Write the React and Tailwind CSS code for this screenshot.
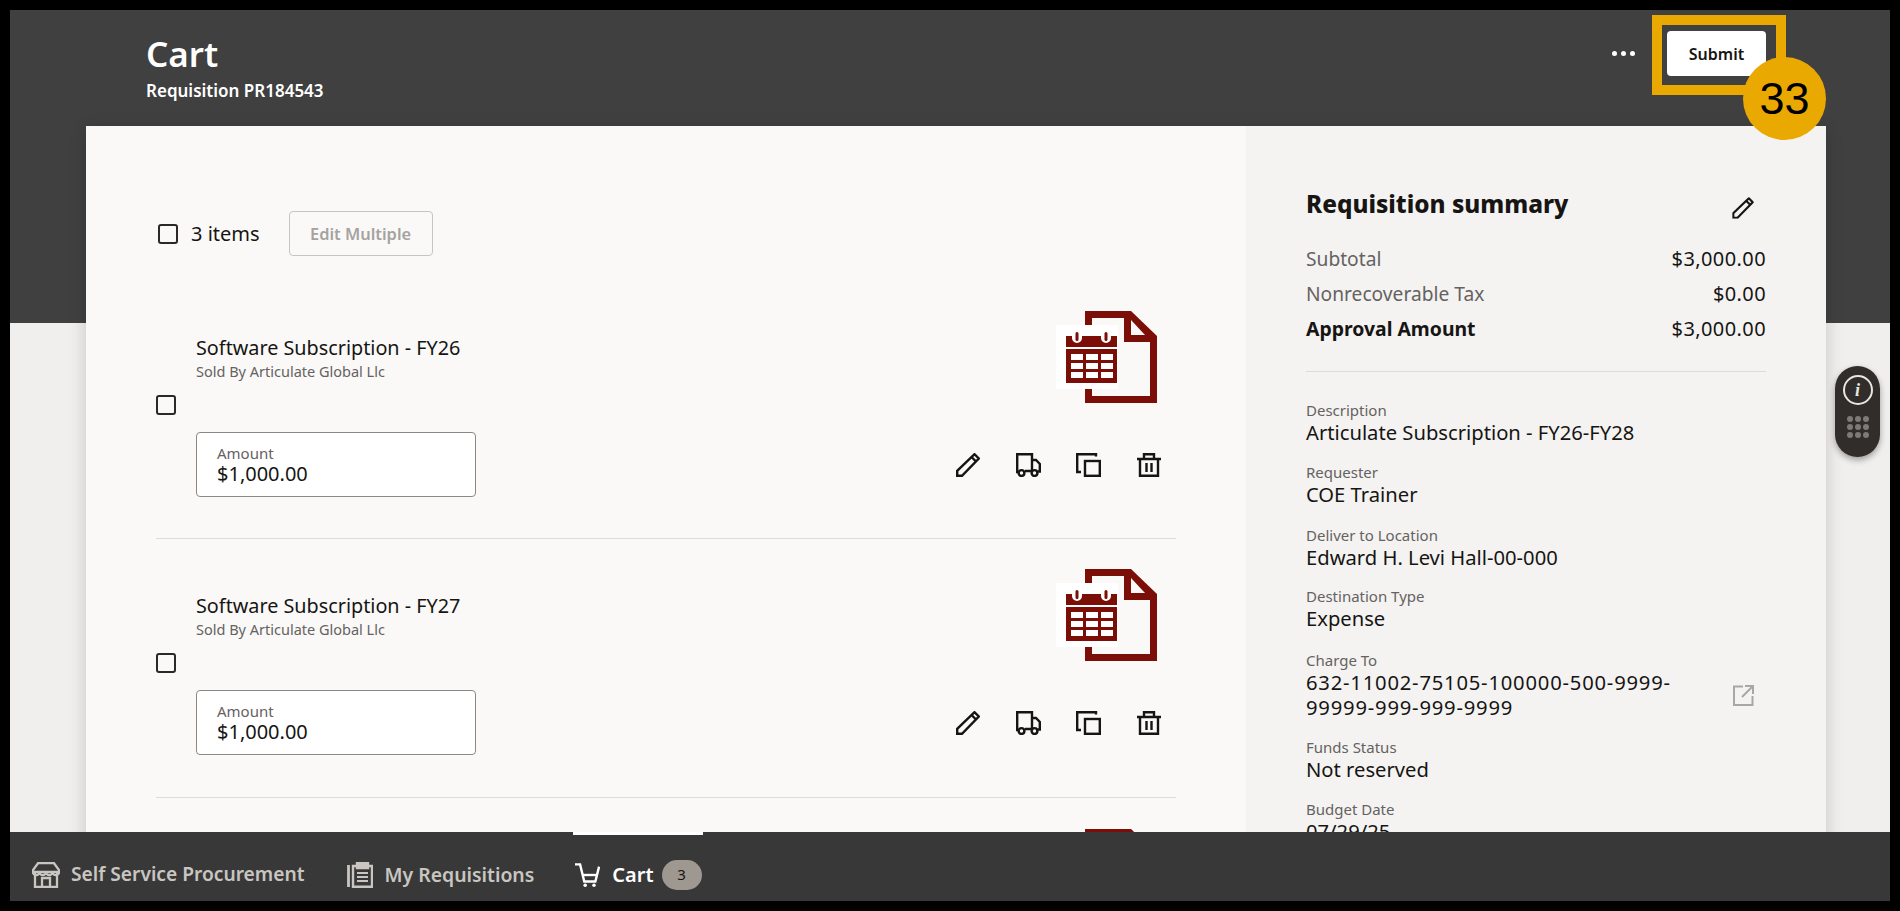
import React from "react";

const INK = "#161513";

const Pencil = ({ className = "", sw = 2.4 }) => (
  <svg viewBox="0 0 24 24" width="24" height="24" fill="none" stroke={INK} strokeWidth={sw} className={className}>
    <path d="M1.2 22.8v-5L18.5 1.2 22.8 5.5 6 22.8z" />
    <path d="M15.5 4l4.5 4.5" />
  </svg>
);
const Truck = () => (
  <svg viewBox="0 0 25 24" width="25" height="24" fill="none" stroke={INK} strokeWidth="2.4">
    <path d="M2 19H1.2V1.2H16V18H9" />
    <path d="M16 7h4l3.8 4v7.5h-1.8" />
    <path d="M16 18h0.5" />
    <circle cx="5.5" cy="20" r="2.9" />
    <circle cx="18.5" cy="20" r="2.9" />
  </svg>
);
const Copy = () => (
  <svg viewBox="0 0 25 24" width="25" height="24" fill="none" stroke={INK} strokeWidth="2.4">
    <path d="M20 3.5V1.2H1.2V19H5" />
    <rect x="9" y="8" width="14.8" height="14.8" />
  </svg>
);
const Trash = () => (
  <svg viewBox="0 0 24 24" width="24" height="24" fill="none" stroke={INK} strokeWidth="2.4">
    <path d="M0 6h24M7 6V1.2h10V6M3 6v16.8h18V6M9.5 10v9M14.5 10v9" />
  </svg>
);
const ExternalLink = () => (
  <svg viewBox="0 0 21 21" width="21" height="21" fill="none" stroke="#a9a7a5" strokeWidth="2">
    <path d="M10 1.5H1V20h18.5v-9M20 1l-11 11M12 1h8v8" />
  </svg>
);

const CalendarDoc = ({ bg = "#faf9f8" }) => (
  <svg viewBox="0 0 101 92" width="101" height="92">
    <path d="M29 0H75L101 25V92H29Z" fill="#7b0e06" />
    <path d="M36 7H68V31H94V85H36Z" fill={bg} />
    <path d="M75 9L89 24H75Z" fill={bg} />
    <rect x="0" y="14" width="62" height="64" fill="#ffffff" />
    <path d="M10 25H16V27A5 5 0 0 0 26 27V25H45V27A5 5 0 0 0 55 27V25H61V36H10Z" fill="#7b0e06" />
    <rect x="19.5" y="21" width="3" height="9" rx="1.5" fill="#7b0e06" />
    <rect x="48.5" y="21" width="3" height="9" rx="1.5" fill="#7b0e06" />
    <rect x="10" y="38" width="51" height="34" fill="#7b0e06" />
    {[15, 30, 45].map((x) =>
      [43, 52, 61].map((y) => <rect key={`${x}-${y}`} x={x} y={y} width="12" height="6" fill="#ffffff" />)
    )}
  </svg>
);

const Checkbox = () => <span className="block w-[20px] h-[20px] rounded-[3px] border-2 border-[#2b2926] bg-transparent" />;

const Item = ({ title, shift, iconOnly }) => (
  <div className={`flex ${shift ? "h-[260px] -mt-[1px]" : "h-[259px]"} ${iconOnly ? "" : "border-b border-[#dedcda]"}`}>
    {iconOnly ? (
      <div className="flex-1" />
    ) : (
      <>
        <div className="w-[40px] pt-[115px]">
          <Checkbox />
        </div>
        <div className="flex-1 pt-[56px]">
          <div className="text-[19.8px] leading-[24px] text-[#161513]">{title}</div>
          <div className="text-[14.5px] leading-[18px] mt-[2px] text-[#65625f]">Sold By Articulate Global Llc</div>
          <div className="mt-[52px] w-[280px] h-[65px] rounded-[4px] border border-[#8b8885] bg-white pl-[20px] pt-[12px]">
            <div className="text-[15px] leading-[16px] mb-[2px] text-[#65625f]">Amount</div>
            <div className="text-[20px] leading-[22px] text-[#161513]">$1,000.00</div>
          </div>
        </div>
      </>
    )}
    <div className="flex flex-col items-end pt-[31px] pr-[15.5px]">
      <div className="mr-[3.5px]">
        <CalendarDoc />
      </div>
      {!iconOnly && (
        <div className="mt-[50px] flex items-center gap-[35.5px]">
          <Pencil />
          <Truck />
          <Copy />
          <Trash />
        </div>
      )}
    </div>
  </div>
);

const SumRow = ({ label, value, bold }) => (
  <div className="flex justify-between h-[35px] items-center">
    <span className={bold ? "text-[19.4px] font-bold text-[#161513]" : "pt-[1px] text-[19.2px] text-[#65625f]"}>{label}</span>
    <span className="text-[20px] tracking-[0.4px] text-[#161513]">{value}</span>
  </div>
);

const Field = ({ label, children, mt = "mt-[19px]" }) => (
  <div className={mt}>
    <div className="text-[15px] leading-[16px] mb-[2px] text-[#65625f]">{label}</div>
    <div className="text-[20.2px] leading-[25px] text-[#161513]">{children}</div>
  </div>
);

const StoreIcon = () => (
  <svg viewBox="0 0 28 26" width="28" height="26" fill="none" stroke="#c9c6c2" strokeWidth="2.3">
    <path d="M3 11V25H25V11" />
    <path d="M6 1.2H22L27 8V10H1V8Z" />
    <path d="M1 10a3.2 3 0 0 0 6.5 0a3.2 3 0 0 0 6.5 0a3.2 3 0 0 0 6.5 0a3.2 3 0 0 0 6.5 0" />
    <path d="M10 25V16H18V25" />
  </svg>
);
const ReqIcon = () => (
  <svg viewBox="0 0 26 26" width="26" height="26" fill="none" stroke="#c9c6c2" strokeWidth="2.4">
    <path d="M1.5 3V25" strokeWidth="2.8" />
    <path d="M9 4H6V24.8H25V4H22" />
    <path d="M10 1H21V6H10Z" fill="#c9c6c2" />
    <path d="M10 11H21M10 15H21M10 19H21" strokeWidth="2.2" />
  </svg>
);
const CartIcon = () => (
  <svg viewBox="0 0 27 26" width="25" height="26" fill="none" stroke="#ffffff" strokeWidth="2.6">
    <path d="M0 1.5H5.5L10 20H22L26 4" />
    <path d="M8 13H24" />
    <circle cx="11" cy="24" r="1.9" fill="#ffffff" stroke="none" />
    <circle cx="20.5" cy="24" r="1.9" fill="#ffffff" stroke="none" />
  </svg>
);

export default function App() {
  return (
    <div
      className="w-[1900px] h-[911px] bg-black p-[10px] overflow-hidden"
      style={{ fontFamily: '"Noto Sans", sans-serif' }}
    >
      <div className="relative w-[1880px] h-[891px] flex flex-col">
        <div className="h-[822px] overflow-hidden bg-[linear-gradient(#404040_0,#404040_313px,#f1efed_313px)]">
          <header className="h-[116px] flex justify-between pl-[136px] pr-[124px]">
            <div className="pt-[21px]">
              <h1 className="text-[35px] leading-[46px] font-semibold text-white">Cart</h1>
              <div className="mt-[3px] text-[17px] leading-[22px] font-semibold text-white">Requisition PR184543</div>
            </div>
            <div className="flex items-start pt-[21px]">
              <div className="h-[45px] flex items-center gap-[4px] mr-[32px]">
                <span className="w-[5px] h-[5px] rounded-full bg-white" />
                <span className="w-[5px] h-[5px] rounded-full bg-white" />
                <span className="w-[5px] h-[5px] rounded-full bg-white" />
              </div>
              <button className="w-[99px] h-[45px] rounded-[4px] bg-white text-[16px] font-semibold text-[#161513]">
                Submit
              </button>
            </div>
          </header>

          <main className="ml-[76px] w-[1740px] flex shadow-[0_4px_16px_rgba(0,0,0,0.18)]">
            <section className="w-[1160px] bg-[#faf9f8] px-[70px] pt-[85px]">
              <div className="h-[45px] flex items-center">
                <span className="ml-[2px]">
                  <Checkbox />
                </span>
                <span className="ml-[13px] text-[20px] text-[#161513]">3 items</span>
                <button className="ml-[29px] w-[144px] h-[45px] pt-[1px] rounded-[4px] border border-[#c7c5c3] text-[16.4px] font-semibold text-[#a5a3a0]">
                  Edit Multiple
                </button>
              </div>
              <div className="mt-[24px]">
                <Item title="Software Subscription - FY26" />
                <Item title="Software Subscription - FY27" shift />
                <Item iconOnly />
              </div>
            </section>

            <aside className="w-[580px] bg-[#f4f3f2] px-[60px] pt-[61px] h-[760px]">
              <div className="flex justify-between items-center h-[34px]">
                <h2 className="text-[24.3px] font-extrabold text-[#161513]">Requisition summary</h2>
                <Pencil className="mr-[11px] mt-[8px] scale-[0.9]" />
              </div>
              <div className="mt-[20px]">
                <SumRow label="Subtotal" value="$3,000.00" />
                <SumRow label="Nonrecoverable Tax" value="$0.00" />
                <SumRow label="Approval Amount" value="$3,000.00" bold />
              </div>
              <div className="mt-[25px] border-t border-[#dedcda]" />
              <Field label="Description" mt="mt-[30px]">Articulate Subscription - FY26-FY28</Field>
              <Field label="Requester">COE Trainer</Field>
              <Field label="Deliver to Location" mt="mt-[20px]">Edward H. Levi Hall-00-000</Field>
              <Field label="Destination Type" mt="mt-[18px]">Expense</Field>
              <div className="mt-[21px] flex items-center justify-between">
                <Field label="Charge To" mt="mt-0">
                  <span className="block w-[390px] tracking-[0.8px]">632-11002-75105-100000-500-9999-99999-999-999-9999</span>
                </Field>
                <span className="mr-[12px] mt-[19px]">
                  <ExternalLink />
                </span>
              </div>
              <Field label="Funds Status">Not reserved</Field>
              <Field label="Budget Date">07/29/25</Field>
            </aside>
          </main>
        </div>

        <nav className="relative h-[69px] bg-[#383838] flex items-center pl-[22px] pt-[16px]">
          <span className="absolute left-[563px] top-0 w-[130px] h-[3px] bg-white" />
          <StoreIcon />
          <span className="ml-[11px] text-[19.2px] font-semibold text-[#c9c6c2]">Self Service Procurement</span>
          <span className="ml-[42px]">
            <ReqIcon />
          </span>
          <span className="ml-[12px] text-[19.4px] font-semibold text-[#c9c6c2]">My Requisitions</span>
          <span className="ml-[41px]">
            <CartIcon />
          </span>
          <span className="ml-[12px] text-[20px] font-semibold text-white">Cart</span>
          <span className="ml-[8px] w-[40px] h-[30px] rounded-full bg-[#9e9890] flex items-center justify-center text-[15px] text-[#161513]">
            3
          </span>
        </nav>

        {/* floating help widget */}
        <div className="absolute left-[1825px] top-[356px] w-[45px] h-[91px] rounded-full bg-[#312d2a] shadow-[0_3px_6px_rgba(0,0,0,0.35)] flex flex-col items-center pt-[9px]">
          <span className="w-[30px] h-[30px] rounded-full border-2 border-[#e8e6e3] flex items-center justify-center text-[18px] italic font-bold text-[#e8e6e3] [font-family:'Liberation_Serif',serif]">
            i
          </span>
          <div className="mt-[11px] grid grid-cols-3 gap-[2px]">
            {Array.from({ length: 9 }).map((_, i) => (
              <span key={i} className="w-[6px] h-[6px] rounded-full bg-[#7d7a77]" />
            ))}
          </div>
        </div>

        {/* callout annotation */}
        <div className="absolute left-[1642px] top-[5px] w-[134px] h-[80px] border-[10px] border-[#eaa900]" />
        <div className="absolute left-[1733px] top-[47px] w-[83px] h-[83px] rounded-full bg-[#eaa900] flex items-center justify-center text-[45px] text-black [font-family:'Liberation_Sans',sans-serif]">
          33
        </div>
      </div>
    </div>
  );
}
